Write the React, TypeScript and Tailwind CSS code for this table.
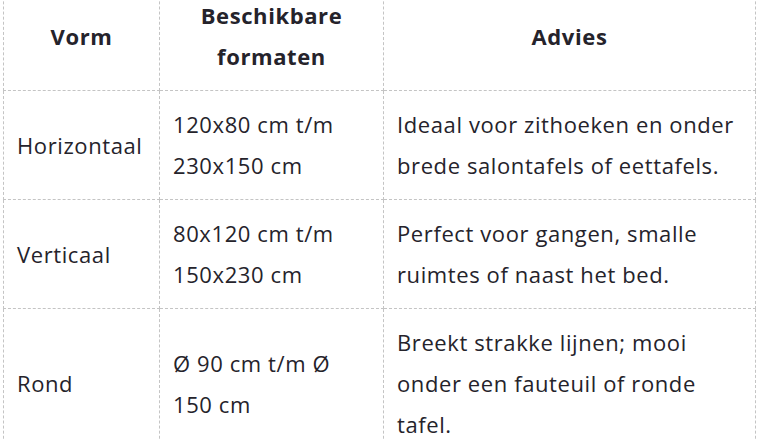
const rows = [
  {
    vorm: "Horizontaal",
    formaten: ["120x80 cm t/m", "230x150 cm"],
    advies: ["Ideaal voor zithoeken en onder", "brede salontafels of eettafels."],
  },
  {
    vorm: "Verticaal",
    formaten: ["80x120 cm t/m", "150x230 cm"],
    advies: ["Perfect voor gangen, smalle", "ruimtes of naast het bed."],
  },
  {
    vorm: "Rond",
    formaten: ["Ø 90 cm t/m Ø", "150 cm"],
    advies: ["Breekt strakke lijnen; mooi", "onder een fauteuil of ronde", "tafel."],
  },
];

function Lines({ lines }: { lines: string[] }) {
  return (
    <>
      {lines.map((l, i) => (
        <span key={i} className="block whitespace-nowrap">
          {l}
        </span>
      ))}
    </>
  );
}

export default function App() {
  const cell = "border border-dashed border-[#c4c4c4] px-[13px] py-[13px] align-middle";
  return (
    <div className="h-[440px] w-[760px] overflow-hidden bg-white font-['Open_Sans','Noto_Sans',sans-serif] text-[22px] leading-[41px] tracking-[0.6px] text-[#25232b]">
      <table className="-mt-[19px] ml-[3px] w-[752px] table-fixed border-collapse">
        <colgroup>
          <col className="w-[156px]" />
          <col className="w-[224px]" />
          <col className="w-[372px]" />
        </colgroup>
        <thead>
          <tr className="font-bold">
            <th className={`${cell} text-center`}>Vorm</th>
            <th className={`${cell} text-center`}>
              <Lines lines={["Beschikbare", "formaten"]} />
            </th>
            <th className={`${cell} text-center`}>Advies</th>
          </tr>
        </thead>
        <tbody>
          {rows.map((r) => (
            <tr key={r.vorm}>
              <td className={cell}>{r.vorm}</td>
              <td className={cell}>
                <Lines lines={r.formaten} />
              </td>
              <td className={cell}>
                <Lines lines={r.advies} />
              </td>
            </tr>
          ))}
        </tbody>
      </table>
    </div>
  );
}
